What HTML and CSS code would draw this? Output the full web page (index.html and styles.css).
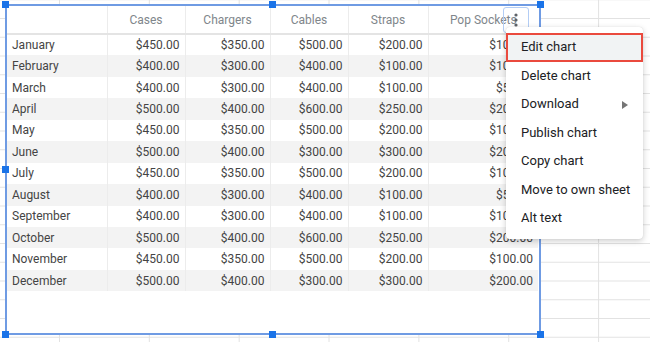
FILE: index.html
```html
<!DOCTYPE html>
<html lang="en">
<head>
    <meta charset="UTF-8">
    <title>Chart menu</title>
    <link rel="stylesheet" href="styles.css">
</head>
<body>
    <div class="chart">
        <table class="chart-table">
            <colgroup>
                <col class="col-month">
                <col class="col-cases">
                <col class="col-chargers">
                <col class="col-cables">
                <col class="col-straps">
                <col class="col-pop">
            </colgroup>
            <thead>
                <tr>
                    <th></th>
                    <th>Cases</th>
                    <th>Chargers</th>
                    <th>Cables</th>
                    <th>Straps</th>
                    <th>Pop Sockets</th>
                </tr>
            </thead>
            <tbody>
                <tr><td>January</td><td>$450.00</td><td>$350.00</td><td>$500.00</td><td>$200.00</td><td>$100.00</td></tr>
                <tr><td>February</td><td>$400.00</td><td>$300.00</td><td>$400.00</td><td>$100.00</td><td>$100.00</td></tr>
                <tr><td>March</td><td>$400.00</td><td>$300.00</td><td>$400.00</td><td>$100.00</td><td>$50.00</td></tr>
                <tr><td>April</td><td>$500.00</td><td>$400.00</td><td>$600.00</td><td>$250.00</td><td>$200.00</td></tr>
                <tr><td>May</td><td>$450.00</td><td>$350.00</td><td>$500.00</td><td>$200.00</td><td>$100.00</td></tr>
                <tr><td>June</td><td>$500.00</td><td>$400.00</td><td>$300.00</td><td>$300.00</td><td>$200.00</td></tr>
                <tr><td>July</td><td>$450.00</td><td>$350.00</td><td>$500.00</td><td>$200.00</td><td>$100.00</td></tr>
                <tr><td>August</td><td>$400.00</td><td>$300.00</td><td>$400.00</td><td>$100.00</td><td>$50.00</td></tr>
                <tr><td>September</td><td>$400.00</td><td>$300.00</td><td>$400.00</td><td>$100.00</td><td>$100.00</td></tr>
                <tr><td>October</td><td>$500.00</td><td>$400.00</td><td>$600.00</td><td>$250.00</td><td>$200.00</td></tr>
                <tr><td>November</td><td>$450.00</td><td>$350.00</td><td>$500.00</td><td>$200.00</td><td>$100.00</td></tr>
                <tr><td>December</td><td>$500.00</td><td>$400.00</td><td>$300.00</td><td>$300.00</td><td>$200.00</td></tr>
            </tbody>
        </table>

        <button class="kebab-btn" aria-label="Chart options">
            <svg width="4" height="14" viewBox="0 0 4 14">
                <circle cx="2" cy="2" r="1.6" fill="#5f6368"/>
                <circle cx="2" cy="7" r="1.6" fill="#5f6368"/>
                <circle cx="2" cy="12" r="1.6" fill="#5f6368"/>
            </svg>
        </button>

        <span class="handle top-left"></span>
        <span class="handle top-mid"></span>
        <span class="handle top-right"></span>
        <span class="handle mid-left"></span>
        <span class="handle mid-right"></span>
        <span class="handle bottom-left"></span>
        <span class="handle bottom-mid"></span>
        <span class="handle bottom-right"></span>
    </div>

    <ul class="chart-menu">
        <li class="menu-item selected">Edit chart</li>
        <li class="menu-item">Delete chart</li>
        <li class="menu-item has-sub">Download <span class="sub-arrow"></span></li>
        <li class="menu-item">Publish chart</li>
        <li class="menu-item">Copy chart</li>
        <li class="menu-item">Move to own sheet</li>
        <li class="menu-item">Alt text</li>
    </ul>
</body>
</html>
```

FILE: styles.css
```css
/* Hoja de calculo de fondo */
body {
    margin: 0;
    width: 650px;
    height: 342px;
    overflow: hidden;
    font-family: Roboto, "Liberation Sans", Arial, sans-serif;
    background-color: #fff;
    background-image:
        linear-gradient(to right, #e2e2e2 1px, transparent 1px),
        linear-gradient(to bottom, #e2e2e2 1px, transparent 1px);
    background-size: 89.85px 100%, 100% 18.75px;
    background-position: 59px 0, 0 18px;
}

/* Grafico (tabla) flotante */
.chart {
    position: absolute;
    left: 5px;
    top: 4px;
    width: 536px;
    height: 331px;
    box-sizing: border-box;
    border: 2px solid #6f9be3;
    background-color: #fff;
}

.chart-table {
    border-collapse: collapse;
    table-layout: fixed;
    width: 531px;
    font-size: 12px;
    color: #444;
}

.col-month { width: 100px; }
.col-cases { width: 78px; }
.col-chargers { width: 85px; }
.col-cables { width: 78px; }
.col-straps { width: 80px; }
.col-pop { width: 110px; }

.chart-table th,
.chart-table td {
    box-sizing: border-box;
    padding: 0 5px;
    border-left: 1px solid #ececec;
    white-space: nowrap;
    overflow: hidden;
}

.chart-table th:first-child,
.chart-table td:first-child {
    border-left: none;
}

.chart-table th {
    height: 28px;
    font-weight: normal;
    color: #80868b;
    text-align: center;
    border-bottom: 2px solid #e4e4e4;
}

.chart-table td {
    height: 21.45px;
    text-align: right;
}

.chart-table td:first-child {
    text-align: left;
}

.chart-table tbody tr:nth-child(even) td {
    background-color: #f3f3f3;
}

.kebab-btn {
    position: absolute;
    left: 496px;
    top: 1px;
    width: 26px;
    height: 26px;
    padding: 0;
    border: 1.5px solid #b3cdf5;
    border-radius: 3px;
    background: transparent;
    display: flex;
    align-items: center;
    justify-content: center;
}

/* Manejadores de seleccion */
.handle {
    position: absolute;
    width: 7px;
    height: 7px;
    background-color: #1a73e8;
}

.top-left { left: -5px; top: -5px; }
.top-mid { left: 262px; top: -5px; }
.top-right { right: -5px; top: -5px; }
.mid-left { left: -5px; top: 160px; }
.mid-right { right: -5px; top: 160px; }
.bottom-left { left: -5px; bottom: -5px; }
.bottom-mid { left: 262px; bottom: -5px; }
.bottom-right { right: -5px; bottom: -5px; }

/* Menu contextual */
.chart-menu {
    position: absolute;
    left: 506px;
    top: 27px;
    width: 137px;
    margin: 0;
    padding: 6px 0;
    list-style: none;
    background-color: #fff;
    border-radius: 4px;
    box-shadow: 0 2px 6px rgba(0,0,0,0.2), 0 0 1px rgba(0,0,0,0.15);
    font-size: 13px;
    color: #202124;
}

.menu-item {
    position: relative;
    height: 28.5px;
    line-height: 28.5px;
    padding-left: 15px;
    white-space: nowrap;
}

.menu-item.selected {
    background-color: #f1f3f4;
    box-shadow: inset 0 0 0 2px #ea4a3e;
}

.sub-arrow {
    position: absolute;
    right: 15px;
    top: 11px;
    width: 0;
    height: 0;
    border-top: 4px solid transparent;
    border-bottom: 4px solid transparent;
    border-left: 6px solid #757575;
}
```
